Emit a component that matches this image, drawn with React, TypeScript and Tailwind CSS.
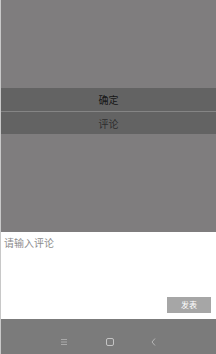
import React from 'react';

const App = () => {
  return (
    <div
      className="w-[216px] h-[354px] flex flex-col overflow-hidden bg-[#7f7d7e] border-l border-[#c8c8c8]"
      style={{ fontFamily: '"Noto Sans CJK SC", "Noto Sans", sans-serif' }}
    >
      {/* dimmed top */}
      <div className="h-[88px] shrink-0" />

      {/* action sheet rows */}
      <div className="shrink-0 flex flex-col bg-[#636363]">
        <div className="h-[23px] flex items-center justify-center text-[10px] text-[#161616]">确定</div>
        <div className="h-px bg-[#858585]" />
        <div className="h-[22px] flex items-center justify-center text-[10px] text-[#2e2e2e]">评论</div>
      </div>

      <div className="flex-1" />

      {/* comment box */}
      <div className="h-[87px] shrink-0 bg-white flex flex-col px-[3px] pt-[5px] pb-[6px]">
        <div className="text-[10px] leading-[12px] text-[#8c8c8c]">请输入评论</div>
        <div className="flex-1" />
        <div className="flex justify-end pr-[2px]">
          <button className="w-[44px] h-[16px] bg-[#a6a6a6] text-white text-[8px] flex items-center justify-center">
            发表
          </button>
        </div>
      </div>

      {/* nav bar */}
      <div className="h-[35px] shrink-0 bg-[#7b7b7b] flex items-end justify-center pb-[8px] gap-[34px]">
        <svg width="10" height="8" viewBox="0 0 10 8" className="mr-[2px]">
          <rect x="2" y="1" width="6" height="1" fill="#a9a9a9" />
          <rect x="2" y="3.5" width="6" height="1" fill="#a9a9a9" />
          <rect x="2" y="6" width="6" height="1" fill="#a9a9a9" />
        </svg>
        <svg width="10" height="8" viewBox="0 0 10 8">
          <rect x="1.5" y="0.5" width="7" height="7" rx="1.5" fill="none" stroke="#c4c4c4" strokeWidth="1" />
        </svg>
        <svg width="10" height="8" viewBox="0 0 10 8">
          <path d="M6 0.5 L3 4 L6 7.5" fill="none" stroke="#b5b5b5" strokeWidth="1" />
        </svg>
      </div>
    </div>
  );
};

export default App;
